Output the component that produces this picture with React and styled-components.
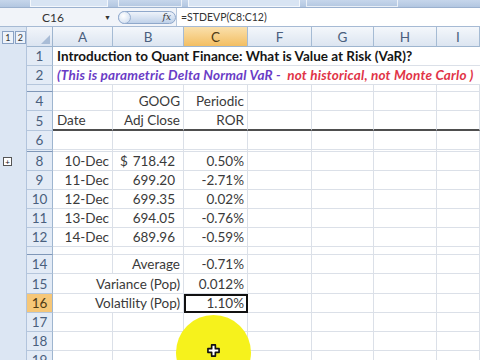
import React from 'react';
import styled, { createGlobalStyle, css } from 'styled-components';

const GlobalStyle = createGlobalStyle`
  html, body { margin: 0; padding: 0; background: #fff; }
  body { font-family: Lato, "Open Sans", sans-serif; }
`;

const COLS = ['A', 'B', 'C', 'F', 'G', 'H', 'I'];

// row data: cells keyed by column letter; wide labels in B spill into A
const ROWS = [
  { n: '1', h: 19, title: true },
  { n: '2', h: 19, subtitle: true },
  { n: '3', h: 7, hidden: true },
  { n: '4', h: 19, cells: { B: { t: 'GOOG' }, C: { t: 'Periodic' } } },
  { n: '5', h: 20, rule: true, cells: { A: { t: 'Date', left: true }, B: { t: 'Adj Close' }, C: { t: 'ROR' } } },
  { n: '6', h: 19 },
  { n: '7', h: 2, hidden: true },
  { n: '8', h: 19, plus: true, cells: { A: { t: '10-Dec' }, B: { t: '718.42', dollar: true }, C: { t: '0.50%' } } },
  { n: '9', h: 19, cells: { A: { t: '11-Dec' }, B: { t: '699.20', acct: true }, C: { t: '-2.71%' } } },
  { n: '10', h: 19, cells: { A: { t: '12-Dec' }, B: { t: '699.35', acct: true }, C: { t: '0.02%' } } },
  { n: '11', h: 19, cells: { A: { t: '13-Dec' }, B: { t: '694.05', acct: true }, C: { t: '-0.76%' } } },
  { n: '12', h: 19, cells: { A: { t: '14-Dec' }, B: { t: '689.96', acct: true }, C: { t: '-0.59%' } } },
  { n: '13', h: 8, hidden: true },
  { n: '14', h: 19, cells: { B: { t: 'Average' }, C: { t: '-0.71%' } } },
  { n: '15', h: 20, spill: true, cells: { B: { t: 'Variance (Pop)' }, C: { t: '0.012%' } } },
  { n: '16', h: 19, spill: true, active: true, cells: { B: { t: 'Volatility (Pop)' }, C: { t: '1.10%', selected: true } } },
  { n: '17', h: 19 },
  { n: '18', h: 19 },
  { n: '19', h: 19 },
];

const Screen = styled.div`
  position: relative;
  width: 480px;
  height: 360px;
  overflow: hidden;
  background: #fff;
`;

// bottom edge of the ribbon
const RibbonEdge = styled.div`
  display: flex;
  height: 7px;
  background: linear-gradient(#c6d6eb, #b3c7e1);
  border-bottom: 1px solid #9bb1cf;
`;

const RibbonGroup = styled.div`
  width: ${p => p.$w}px;
  margin-left: ${p => p.$gap}px;
  border: 1px solid rgba(255, 255, 255, 0.7);
  border-top: none;
  background: ${p => (p.$light ? '#d8e4f3' : 'transparent')};
`;

const FormulaBar = styled.div`
  display: flex;
  align-items: center;
  height: 18px;
  background: #f1f4f9;
  border-bottom: 1px solid #a6bad4;
  color: #333;
  font-size: 11px;
`;

const NameBox = styled.div`
  width: 104px;
  padding-left: 42px;
  box-sizing: border-box;
  font-size: 12px;
  color: #333;
`;

const Caret = styled.span`
  width: 12px;
  font-size: 7px;
  color: #333;
`;

const FxPill = styled.div`
  display: flex;
  align-items: center;
  justify-content: space-between;
  width: 58px;
  height: 13px;
  margin-left: 2px;
  padding-right: 4px;
  box-sizing: border-box;
  border: 1px solid #8fa8cb;
  border-radius: 8px;
  background: linear-gradient(#eef3fa, #bfd1e9);
`;

const Knob = styled.span`
  width: 11px;
  height: 11px;
  border-radius: 50%;
  background: radial-gradient(circle at 40% 35%, #ffffff, #c9d9ee);
  border: 1px solid #9ab1d2;
  margin-left: -1px;
`;

const Fx = styled.span`
  font-family: "DejaVu Serif", serif;
  font-style: italic;
  font-size: 9px;
  color: #333;
`;

const FormulaInput = styled.div`
  flex: 1;
  height: 100%;
  display: flex;
  align-items: center;
  padding-left: 4px;
  background: #fff;
  border-left: 1px solid #b7c8de;
  font-size: 10.5px;
  color: #333;
`;

const Sheet = styled.div`
  display: grid;
  grid-template-columns: 27px 26px 60px 71px 64px 64px 62px 63px 43px;
`;

const Outline = styled.div`
  display: flex;
  align-items: center;
  gap: 1px;
  padding-left: 2px;
  height: ${p => p.$h}px;
  background: #dce6f3;
  border-right: 1px solid #b2c4dc;
  box-sizing: border-box;
`;

const LevelButton = styled.span`
  width: 10px;
  height: 11px;
  display: flex;
  align-items: center;
  justify-content: center;
  border: 1px solid #8aa2c4;
  background: #eef3fa;
  font-size: 9px;
  color: #333;
`;

const PlusButton = styled.span`
  width: 7px;
  height: 7px;
  margin-left: 1px;
  display: flex;
  align-items: center;
  justify-content: center;
  border: 1px solid #555;
  background: #fff;
  font-size: 8px;
  line-height: 1;
  color: #111;
`;

const Corner = styled.div`
  display: flex;
  align-items: flex-end;
  justify-content: flex-end;
  padding: 0 2px 2px 0;
  height: 20px;
  box-sizing: border-box;
  background: linear-gradient(#f2f5fa, #dbe4f1);
  border-right: 1px solid #9eb5cf;
  border-bottom: 1px solid #9eb5cf;
`;

const headFill = css`
  background: ${p =>
    p.$active ? 'linear-gradient(#fae0ac, #f3be62)' : 'linear-gradient(#f4f7fb, #dce5f1)'};
  color: ${p => (p.$active ? '#4f3a14' : '#4a5f7e')};
`;

const ColHead = styled.div`
  display: flex;
  align-items: center;
  justify-content: center;
  height: 20px;
  box-sizing: border-box;
  border-right: 1px solid #a5bbd4;
  border-bottom: 1px solid #9eb5cf;
  font-size: 13.5px;
  ${headFill}
`;

const RowHead = styled.div`
  display: flex;
  align-items: center;
  justify-content: center;
  height: ${p => p.$h}px;
  box-sizing: border-box;
  overflow: hidden;
  border-right: 1px solid #9eb5cf;
  border-bottom: 1px solid ${p => (p.$hidden ? '#7f97b8' : '#b5c6dc')};
  font-size: 13.5px;
  ${headFill}
  background: ${p => (p.$active ? '#f6c778' : '#e3ebf6')};
`;

const Cell = styled.div`
  grid-column: span ${p => p.$span || 1};
  display: flex;
  align-items: center;
  justify-content: ${p => (p.$left ? 'flex-start' : p.$split ? 'space-between' : 'flex-end')};
  height: ${p => p.$h}px;
  box-sizing: border-box;
  padding: 0 ${p => p.$pr}px 0 ${p => p.$pl}px;
  border-right: 1px solid #dbe0e8;
  border-bottom: ${p => (p.$rule ? '2px solid #4e4e4e' : '1px solid #dbe0e8')};
  white-space: nowrap;
  overflow: hidden;
  font-size: 13.5px;
  color: #3a3a3a;
  ${p =>
    p.$selected &&
    css`
      outline: 2px solid #111;
      outline-offset: -2px;
      position: relative;
      z-index: 1;
    `}
`;

const WideCell = styled.div`
  grid-column: 3 / -1;
  display: flex;
  align-items: center;
  height: ${p => p.$h}px;
  box-sizing: border-box;
  padding-left: 4px;
  border-bottom: 1px solid #dbe0e8;
  white-space: nowrap;
  overflow: hidden;
  font-size: 13.5px;
  font-weight: 700;
  color: #151515;
`;

const Tone = styled.span`
  font-style: italic;
  white-space: pre;
  letter-spacing: 0.2px;
  color: ${p => (p.$red ? '#e13447' : '#6a3cc6')};
`;

const Highlight = styled.div`
  position: absolute;
  left: 176px;
  top: 315px;
  width: 75px;
  height: 75px;
  border-radius: 50%;
  background: #f6f21c;
  display: flex;
  align-items: center;
  justify-content: center;
`;

const Pointer = styled.svg`
  margin-top: -5px;
`;

function CellFor({ row, col }) {
  const c = row.cells && row.cells[col];
  const base = { $h: row.h, $rule: row.rule, $pl: 4, $pr: 3 };
  if (row.spill && col === 'A') return null;
  if (!c) return <Cell {...base} />;
  if (c.dollar) {
    return (
      <Cell {...base} $split $pl={7} $pr={8}>
        <span>$</span>
        <span>{c.t}</span>
      </Cell>
    );
  }
  return (
    <Cell
      {...base}
      $span={row.spill && col === 'B' ? 2 : 1}
      $left={c.left}
      $pr={c.acct ? 8 : 3}
      $selected={c.selected}
    >
      {c.t}
    </Cell>
  );
}

function Row({ row }) {
  return (
    <>
      <Outline $h={row.h}>{row.plus && <PlusButton>+</PlusButton>}</Outline>
      <RowHead $h={row.h} $hidden={row.hidden} $active={row.active}>
        {row.hidden ? '' : row.n}
      </RowHead>
      {row.title && (
        <WideCell $h={row.h}>Introduction to Quant Finance: What is Value at Risk (VaR)?</WideCell>
      )}
      {row.subtitle && (
        <WideCell $h={row.h}>
          <Tone>(This is parametric Delta Normal VaR -  </Tone>
          <Tone $red>not historical, not Monte Carlo )</Tone>
        </WideCell>
      )}
      {!row.title && !row.subtitle && COLS.map(col => <CellFor key={col} row={row} col={col} />)}
    </>
  );
}

export default function App() {
  return (
    <Screen>
      <GlobalStyle />
      <RibbonEdge>
        <RibbonGroup $w={76} $gap={30} $light />
        <RibbonGroup $w={62} $gap={10} />
        <RibbonGroup $w={110} $gap={6} $light />
        <RibbonGroup $w={90} $gap={6} />
      </RibbonEdge>
      <FormulaBar>
        <NameBox>C16</NameBox>
        <Caret>▼</Caret>
        <FxPill>
          <Knob />
          <Fx>fx</Fx>
        </FxPill>
        <FormulaInput>=STDEVP(C8:C12)</FormulaInput>
      </FormulaBar>
      <Sheet>
        <Outline $h={20}>
          <LevelButton>1</LevelButton>
          <LevelButton>2</LevelButton>
        </Outline>
        <Corner>
          <svg width="9" height="9" viewBox="0 0 9 9">
            <polygon points="9,0 9,9 0,9" fill="#a9bcd6" />
          </svg>
        </Corner>
        {COLS.map(col => (
          <ColHead key={col} $active={col === 'C'}>
            {col}
          </ColHead>
        ))}
        {ROWS.map(row => (
          <Row key={row.n} row={row} />
        ))}
      </Sheet>
      <Highlight>
        <Pointer width="13" height="13" viewBox="0 0 14 14">
          <path
            d="M5 1h4v4h4v4H9v4H5V9H1V5h4z"
            fill="#fff"
            stroke="#111"
            strokeWidth="1.8"
            strokeLinejoin="round"
          />
        </Pointer>
      </Highlight>
    </Screen>
  );
}
